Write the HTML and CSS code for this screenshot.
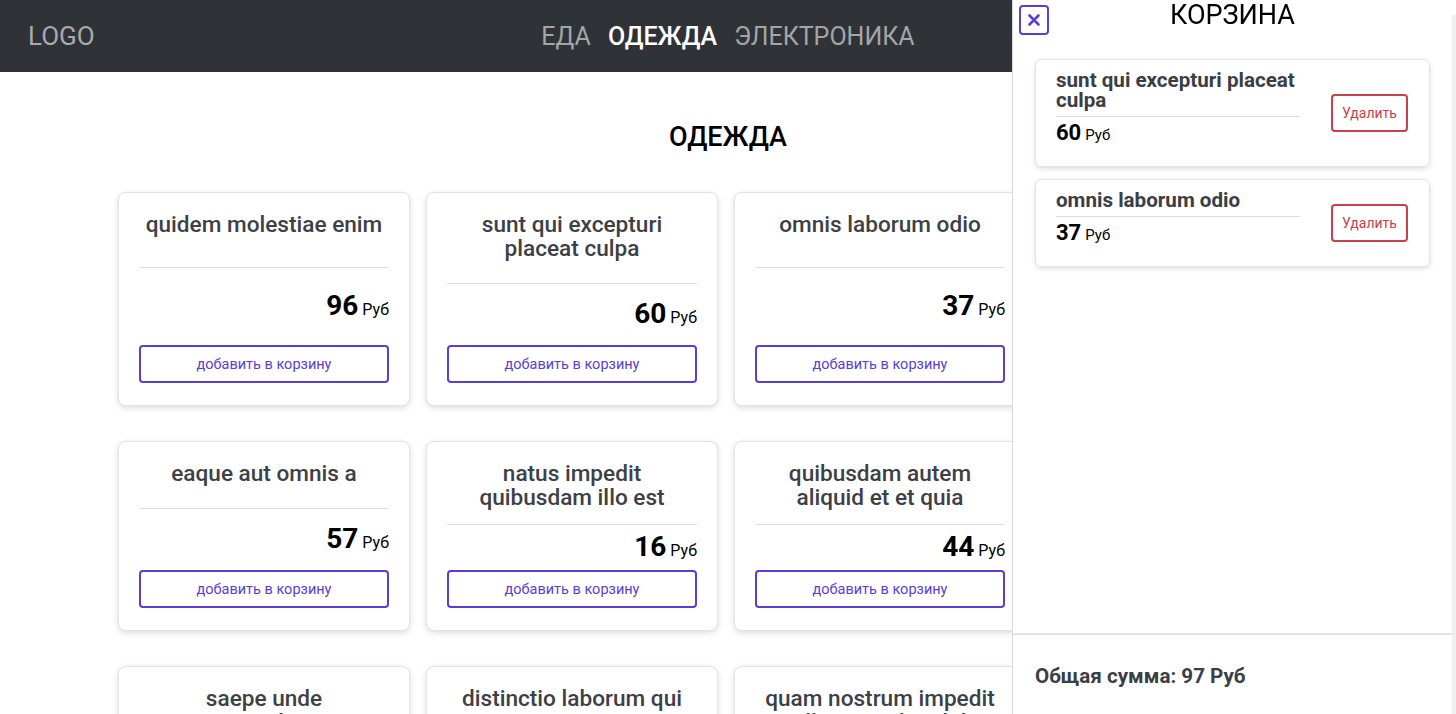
FILE: index.html
```html
<!DOCTYPE html>
<html lang="ru">
<head>
<meta charset="utf-8">
<title>Магазин</title>
<link rel="stylesheet" href="styles.css">
</head>
<body>
<header class="topbar">
  <div class="logo">LOGO</div>
  <nav class="nav">
    <a class="nav-link">ЕДА</a>
    <a class="nav-link active">ОДЕЖДА</a>
    <a class="nav-link">ЭЛЕКТРОНИКА</a>
  </nav>
  <div></div>
</header>

<main class="main">
  <h1 class="page-title">ОДЕЖДА</h1>
  <div class="grid">
    <div class="card"><div class="card-title">quidem molestiae enim</div><hr class="rule"><div class="price"><b>96</b> <span>Руб</span></div><button class="add-btn">добавить в корзину</button></div>
    <div class="card"><div class="card-title">sunt qui excepturi placeat culpa</div><hr class="rule"><div class="price"><b>60</b> <span>Руб</span></div><button class="add-btn">добавить в корзину</button></div>
    <div class="card"><div class="card-title">omnis laborum odio</div><hr class="rule"><div class="price"><b>37</b> <span>Руб</span></div><button class="add-btn">добавить в корзину</button></div>
    <div class="card"><div class="card-title">non esse culpa molestiae omnis sed optio</div><hr class="rule"><div class="price"><b>72</b> <span>Руб</span></div><button class="add-btn">добавить в корзину</button></div>

    <div class="card"><div class="card-title">eaque aut omnis a</div><hr class="rule"><div class="price"><b>57</b> <span>Руб</span></div><button class="add-btn">добавить в корзину</button></div>
    <div class="card"><div class="card-title">natus impedit quibusdam illo est</div><hr class="rule"><div class="price"><b>16</b> <span>Руб</span></div><button class="add-btn">добавить в корзину</button></div>
    <div class="card"><div class="card-title">quibusdam autem aliquid et et quia</div><hr class="rule"><div class="price"><b>44</b> <span>Руб</span></div><button class="add-btn">добавить в корзину</button></div>
    <div class="card"><div class="card-title">qui fuga est a eum</div><hr class="rule"><div class="price"><b>23</b> <span>Руб</span></div><button class="add-btn">добавить в корзину</button></div>

    <div class="card"><div class="card-title">saepe unde necessitatibus rem</div><hr class="rule"><div class="price"><b>81</b> <span>Руб</span></div><button class="add-btn">добавить в корзину</button></div>
    <div class="card"><div class="card-title">distinctio laborum qui</div><hr class="rule"><div class="price"><b>12</b> <span>Руб</span></div><button class="add-btn">добавить в корзину</button></div>
    <div class="card"><div class="card-title">quam nostrum impedit mollitia quod et dolor</div><hr class="rule"><div class="price"><b>65</b> <span>Руб</span></div><button class="add-btn">добавить в корзину</button></div>
    <div class="card"><div class="card-title">consequatur autem doloribus natus consectetur</div><hr class="rule"><div class="price"><b>39</b> <span>Руб</span></div><button class="add-btn">добавить в корзину</button></div>
  </div>
</main>

<aside class="cart">
  <div class="cart-head">
    <button class="close-btn" aria-label="Закрыть">
      <svg width="14" height="14" viewBox="0 0 14 14"><path d="M2.5 2.5L11.5 11.5M11.5 2.5L2.5 11.5" stroke="#5a3ed6" stroke-width="2.6" stroke-linecap="round"/></svg>
    </button>
    <div class="cart-title">КОРЗИНА</div>
  </div>
  <div class="cart-body">
    <div class="cart-item">
      <div class="cart-info">
        <div class="cart-name">sunt qui excepturi placeat culpa</div>
        <hr class="rule cart-rule">
        <div class="cart-price"><b>60</b> <span>Руб</span></div>
      </div>
      <button class="del-btn">Удалить</button>
    </div>
    <div class="cart-item">
      <div class="cart-info">
        <div class="cart-name">omnis laborum odio</div>
        <hr class="rule cart-rule">
        <div class="cart-price"><b>37</b> <span>Руб</span></div>
      </div>
      <button class="del-btn">Удалить</button>
    </div>
  </div>
  <div class="cart-foot">Общая сумма: 97 Руб</div>
</aside>
</body>
</html>
```

FILE: styles.css
```css
* { box-sizing: border-box; }
html, body { height: 100%; }
body {
  margin: 0;
  font-family: Roboto, "Noto Sans", "Liberation Sans", sans-serif;
  background: #fff;
  color: #000;
  overflow: hidden;
}

.topbar {
  height: 72px;
  background: #2f3236;
  display: grid;
  grid-template-columns: 1fr auto 1fr;
  align-items: center;
  padding: 0 28px;
}
.logo {
  font-size: 26px;
  color: #a9aaac;
}
.nav {
  display: flex;
  gap: 17px;
}
.nav-link {
  font-size: 25px;
  color: #a4a5a7;
  text-decoration: none;
}
.nav-link.active {
  color: #fff;
  font-weight: 500;
}

.main {
  width: 1220px;
  margin: 0 auto;
}
.page-title {
  margin: 51px 0 40px;
  text-align: center;
  font-size: 27px;
  line-height: 29px;
  font-weight: 500;
}
.grid {
  display: grid;
  grid-template-columns: repeat(4, 292px);
  column-gap: 16px;
  row-gap: 35px;
}
.card {
  border: 1px solid #e3e3e3;
  border-radius: 8px;
  box-shadow: 0 2px 6px rgba(0, 0, 0, 0.14);
  padding: 20px 20px 22px;
  display: flex;
  flex-direction: column;
  justify-content: space-between;
  background: #fff;
}
.card-title {
  font-size: 22.6px;
  line-height: 24px;
  font-weight: 500;
  color: #3d4046;
  text-align: center;
}
.rule {
  border: 0;
  border-top: 1px solid #dedede;
  margin: 14px 0 5px;
  width: 100%;
}
.price {
  text-align: right;
  height: 33px;
  line-height: 33px;
  margin-bottom: 7px;
  color: #000;
}
.price b { font-size: 28px; font-weight: 700; }
.price span { font-size: 16px; }
.add-btn {
  height: 38px;
  border: 2px solid #5a3ed6;
  border-radius: 4px;
  background: #fff;
  color: #5a3ed6;
  font-family: inherit;
  font-size: 14.5px;
  width: 100%;
}

.cart {
  position: fixed;
  top: 0;
  right: 0;
  bottom: 0;
  width: 444px;
  background: #fff;
  border-left: 1px solid #d9d9d9;
  display: flex;
  flex-direction: column;
  padding-right: 4px;
}
.cart::after {
  content: "";
  position: absolute;
  right: 0;
  top: 15px;
  bottom: 0;
  width: 4px;
  background: #efefef;
}
.cart-head {
  position: relative;
  height: 59px;
}
.cart-title {
  text-align: center;
  font-size: 27px;
  line-height: 30px;
  color: #000;
}
.close-btn {
  position: absolute;
  left: 6px;
  top: 5px;
  width: 30px;
  height: 30px;
  border: 2px solid #5a3ed6;
  border-radius: 4px;
  background: #fff;
  padding: 0;
  display: flex;
  align-items: center;
  justify-content: center;
}
.cart-body {
  flex: 1;
  padding: 0 22px;
  display: flex;
  flex-direction: column;
  gap: 12px;
}
.cart-item {
  border: 1px solid #e3e3e3;
  border-radius: 6px;
  box-shadow: 0 2px 5px rgba(0, 0, 0, 0.13);
  padding: 10px 21px 10px 20px;
  display: flex;
  align-items: center;
  gap: 31px;
}
.cart-info { flex: 1; }
.cart-name {
  font-size: 20.6px;
  line-height: 20px;
  font-weight: 700;
  color: #3b3e44;
}
.cart-rule { margin: 6px 0 1px; }
.cart-price {
  height: 30px;
  line-height: 30px;
  margin-bottom: 8px;
  color: #000;
}
.cart-price b { font-size: 22px; font-weight: 700; }
.cart-price span { font-size: 15px; }
.del-btn {
  width: 77px;
  height: 38px;
  border: 2px solid #c8404c;
  border-radius: 4px;
  background: #fff;
  color: #c8404c;
  font-family: inherit;
  font-size: 14px;
  padding: 0;
}
.cart-foot {
  border-top: 2px solid #e4e4e4;
  height: 81px;
  padding: 30px 22px 0;
  font-size: 20.6px;
  line-height: 22px;
  font-weight: 700;
  color: #3b3e44;
}
```
